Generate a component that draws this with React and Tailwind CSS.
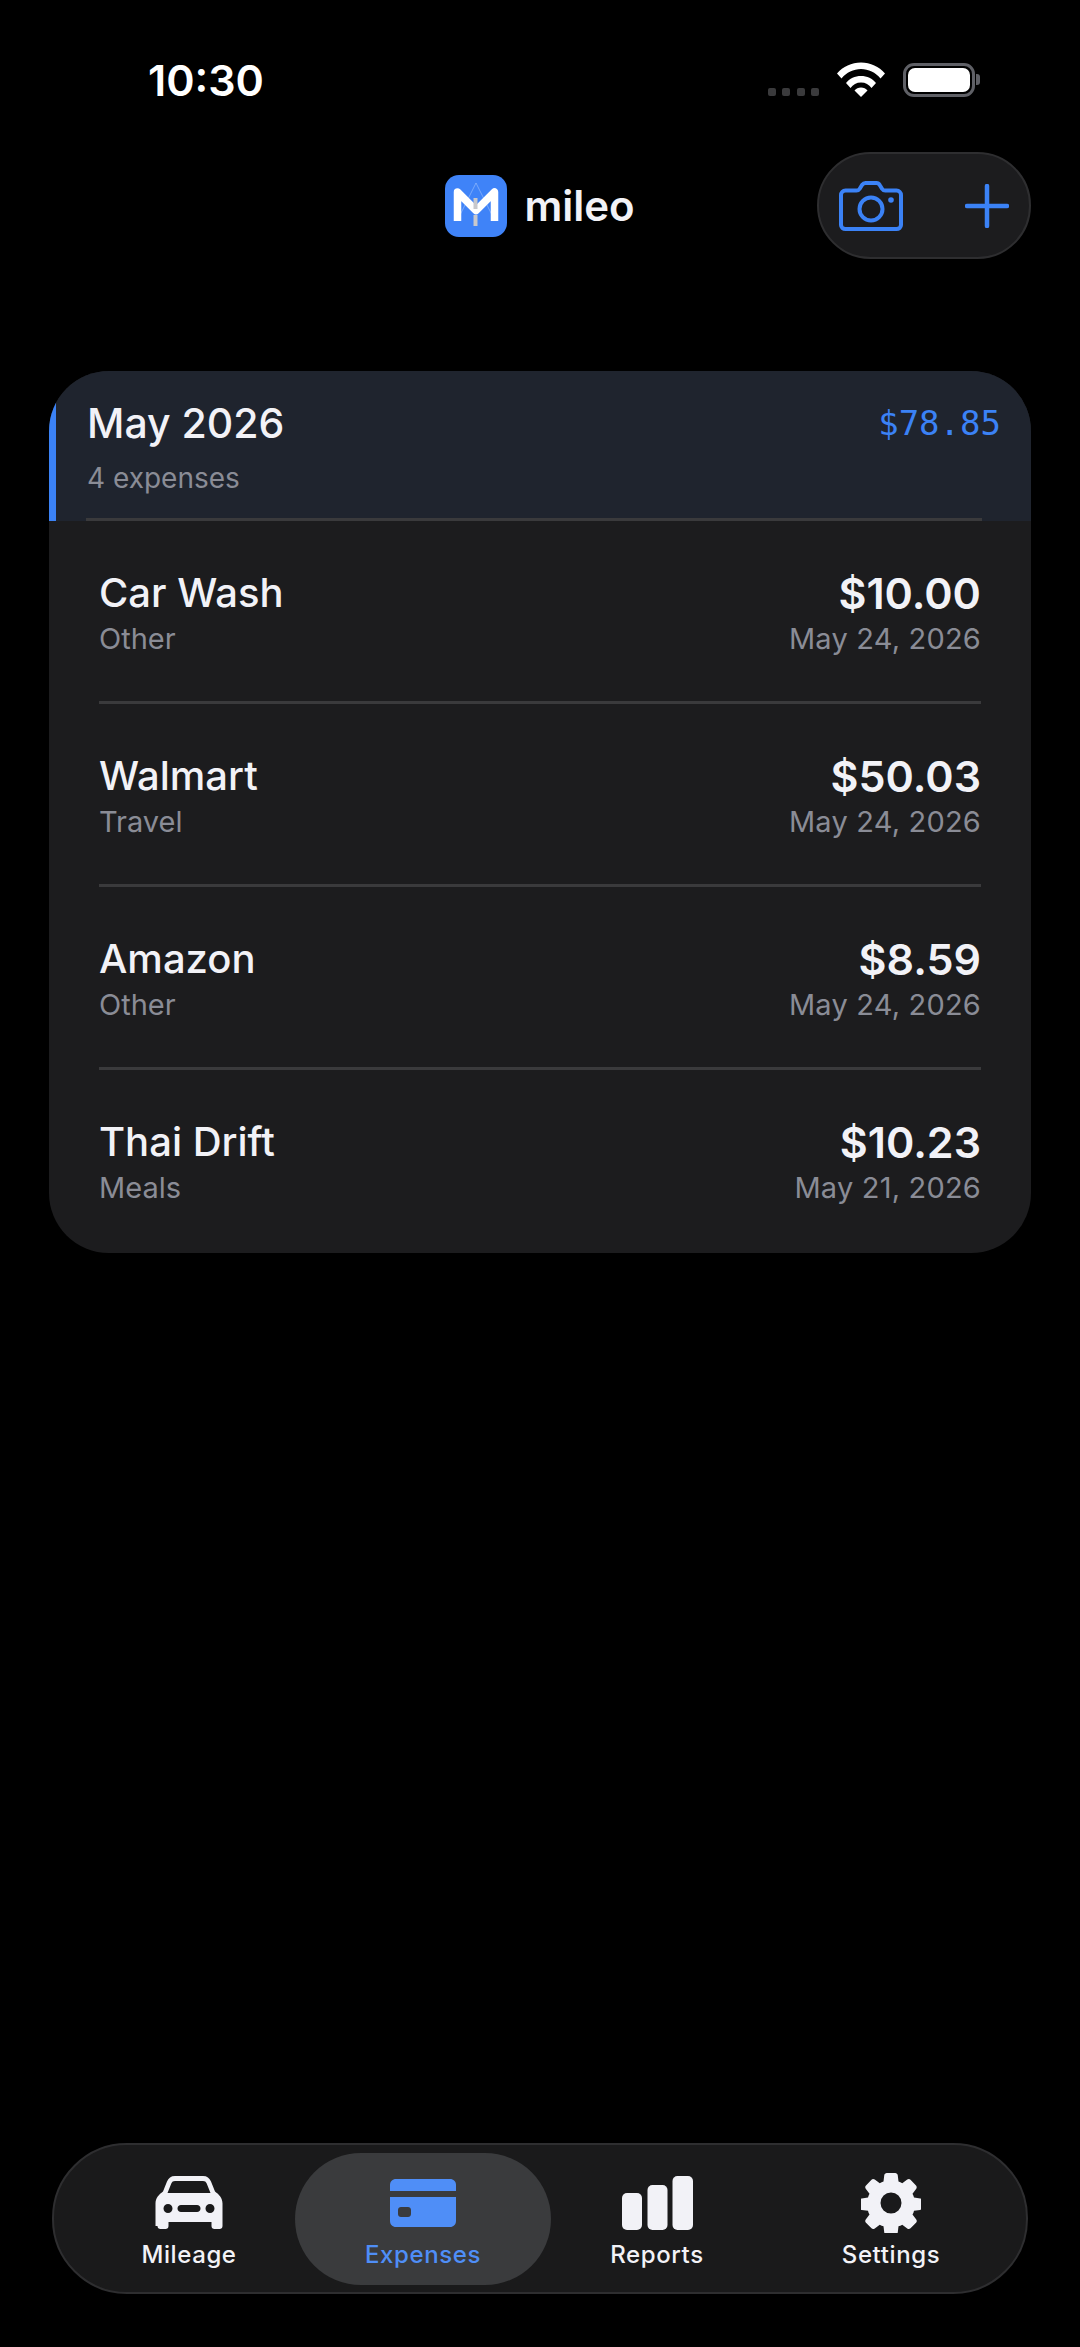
const Row = ({ title, sub, amount, date, last }) => (
  <div className={`mx-[50px] h-[183px] flex justify-between ${last ? "" : "border-b-[3px] border-[#3a3a3c]"}`}>
    <div className="pt-[47px] flex flex-col">
      <span className="text-[40px] leading-[50px] text-[#f2f2f7] [font-weight:450]">{title}</span>
      <span className="text-[29px] leading-[36px] text-[#8a8c96] mt-[3px]">{sub}</span>
    </div>
    <div className="pt-[47px] flex flex-col items-end">
      <span className="text-[43px] leading-[50px] font-semibold text-[#f2f2f7]">{amount}</span>
      <span className="text-[29px] leading-[36px] text-[#8a8c96] mt-[3px] tracking-[0.2px]">{date}</span>
    </div>
  </div>
);

const Wifi = () => (
  <svg width="48" height="35" viewBox="0 0 48 35" fill="#fff">
    <path d="M0 11.5C6 4.5 14.5 0.5 24 0.5s18 4 24 11l-4.500 5C38.500 10.500 31.500 7 24 7S9.500 10.500 4.500 16.500z" />
    <path d="M9 21C12.500 16.500 18 14 24 14s11.500 2.500 15 7l-4.500 5C32 22.500 28.500 20.500 24 20.500S16 22.500 13.500 26z" />
    <path d="M17.500 28.500C19 26.500 21.500 25.500 24 25.500s5 1 6.500 3L24 35z" />
  </svg>
);

const Battery = () => (
  <div className="flex items-center">
    <div className="w-[72px] h-[34px] rounded-[11px] border-[3px] border-[#5f6066] p-[2px]">
      <div className="w-full h-full bg-white rounded-[7px]" />
    </div>
    <div className="w-[4px] h-[11px] bg-[#5f6066] rounded-r-[3px] ml-[1px]" />
  </div>
);

const Logo = () => (
  <svg width="62" height="62" viewBox="0 0 62 62">
    <rect width="62" height="62" rx="14" fill="#3f83f8" />
    <path d="M31 8L12 46M31 8l19 38" stroke="#ffffff" strokeOpacity="0.3" strokeWidth="1" fill="none" />
    <path d="M12.500 46V17L31 35.500 49.500 17V46" fill="none" stroke="#fff" strokeWidth="7.500" strokeLinejoin="round" />
    <path d="M30.500 23v11M30.500 40v11" stroke="#c8c8cc" strokeWidth="4" />
  </svg>
);

const Camera = () => (
  <svg width="64" height="50" viewBox="0 0 64 50" fill="none" stroke="#3b82f6" strokeWidth="4" strokeLinejoin="round">
    <path d="M2 14c0-2.500 2-4.500 4.500-4.500h11c1.500 0 2.500-.7 3.200-1.800l2.300-3.700C24 2.700 25.300 2 26.500 2h11c1.200 0 2.500.7 3.200 2l2.300 3.700c.7 1.100 1.700 1.800 3.200 1.800h11.300c2.500 0 4.500 2 4.500 4.500v30c0 2.500-2 4-4.500 4H6.500C4 48 2 46.500 2 44z" />
    <circle cx="32" cy="28" r="11.500" />
    <circle cx="52" cy="19" r="2.800" fill="#3b82f6" stroke="none" />
  </svg>
);

const Plus = () => (
  <svg width="44" height="44" viewBox="0 0 44 44" fill="none" stroke="#3b82f6" strokeWidth="4.500" strokeLinecap="round">
    <path d="M22 2v40M2 22h40" />
  </svg>
);

const Car = () => (
  <svg width="68" height="53" viewBox="0 0 68 53" fill="#f2f2f7" fillRule="evenodd">
    <path d="M20 0h28c4 0 6.500 2 8 5.500l4 10c4 3 7.500 6.500 7.500 12V50c0 1.800-1.200 3-3 3h-5c-1.800 0-3-1.200-3-3v-4H13.500v4c0 1.800-1.200 3-3 3h-5c-1.800 0-3-1.200-3-3V50H.5V27.500c0-5.500 3.500-9 7.500-12l4-10C13.500 2 16 0 20 0zM20 5c-1.800 0-3 .8-3.700 2.500L12.500 17h43L51.700 7.500C51 5.800 49.800 5 48 5zM17.500 32.500a4.500 4.500 0 1 0-9 0 4.500 4.500 0 0 0 9 0zM59.500 32.500a4.500 4.500 0 1 0-9 0 4.500 4.500 0 0 0 9 0zM26 29c-2 0-3.500 1.500-3.500 3.500S24 36 26 36h16c2 0 3.500-1.500 3.500-3.500S44 29 42 29z" />
  </svg>
);

const CardIcon = () => (
  <svg width="66" height="48" viewBox="0 0 66 48" fill="#4f8ef7" fillRule="evenodd">
    <path d="M0 12V6c0-3.500 2.500-6 6-6h54c3.500 0 6 2.500 6 6v6z" />
    <path d="M0 18h66v24c0 3.500-2.500 6-6 6H6c-3.500 0-6-2.500-6-6zM11 28c-1.700 0-3 1.300-3 3v4c0 1.700 1.300 3 3 3h7c1.700 0 3-1.300 3-3v-4c0-1.700-1.300-3-3-3z" />
  </svg>
);

const Bars = () => (
  <svg width="71" height="54" viewBox="0 0 71 54" fill="#f2f2f7">
    <rect x="0" y="17" width="20" height="37" rx="5" />
    <rect x="25.500" y="9" width="20" height="45" rx="5" />
    <rect x="50.500" y="0" width="20.500" height="54" rx="5" />
  </svg>
);

const Gear = () => (
  <svg width="60" height="60" viewBox="0 0 24 24" fill="#f2f2f7" fillRule="evenodd">
    <path d="M10.300 0h3.400c.5 0 .9.400 1 .9l.3 2.500c.5.200 1 .4 1.500.7l2-1.500c.4-.3 1-.3 1.300.1l2.200 2.300c.3.300.4.900.1 1.300l-1.500 2c.3.500.5 1 .6 1.500l2.500.4c.5.100.8.500.8 1v2.600c0 .5-.4.900-.9 1l-2.400.3c-.1.500-.3 1-.6 1.500l1.500 2c.3.400.3 1-.1 1.300l-2.200 2.200c-.4.400-.9.400-1.300.1l-2-1.500c-.5.300-1 .5-1.500.6l-.3 2.500c-.1.500-.5.900-1 .9h-3.400c-.5 0-.9-.4-1-.9l-.3-2.500c-.5-.1-1-.3-1.500-.6l-2 1.500c-.4.300-1 .3-1.300-.1l-2.200-2.200c-.4-.3-.4-.9-.1-1.300l1.500-2c-.3-.5-.5-1-.6-1.500l-2.500-.3c-.5-.1-.8-.5-.8-1v-2.600c0-.5.300-.9.800-1l2.500-.4c.1-.5.300-1 .6-1.500l-1.500-2c-.3-.4-.3-1 .1-1.300l2.200-2.300c.3-.4.900-.4 1.300-.1l2 1.500c.5-.3 1-.5 1.500-.7L9.300.9c.1-.5.500-.9 1-.9zM12 7.800a4.200 4.200 0 1 0 0 8.400 4.200 4.200 0 0 0 0-8.400z" />
  </svg>
);

const NavItem = ({ icon, label, active }) => (
  <div className={`h-[132px] flex flex-col items-center ${active ? "-mx-[11px] bg-[#3a3b3d] rounded-[66px]" : ""}`}>
    <div className="h-[68px] mt-[16px] flex items-center justify-center">{icon}</div>
    <span className={`text-[24px] leading-[32px] mt-[2px] tracking-[0.6px] [font-weight:450] ${active ? "text-[#4f8ef7]" : "text-[#f2f2f7]"}`}>{label}</span>
  </div>
);

export default function App() {
  return (
    <div className="w-[1080px] h-[2347px] bg-black flex flex-col [font-family:Inter,sans-serif] overflow-hidden">
      <div className="h-[152px] pl-[148px] pr-[100px] pt-[54px] flex justify-between items-start">
        <span className="text-[43px] leading-[52px] font-semibold text-white">10:30</span>
        <div className="flex items-center mt-[8px]">
          <div className="flex gap-[6.500px] mt-[24px] mr-[18px]">
            <div className="w-[8px] h-[8px] rounded-[2px] bg-[#3a3a3c]" />
            <div className="w-[8px] h-[8px] rounded-[2px] bg-[#3a3a3c]" />
            <div className="w-[8px] h-[8px] rounded-[2px] bg-[#3a3a3c]" />
            <div className="w-[8px] h-[8px] rounded-[2px] bg-[#3a3a3c]" />
          </div>
          <Wifi />
          <div className="ml-[18px]"><Battery /></div>
        </div>
      </div>

      <div className="h-[107px] relative flex justify-center items-center">
        <div className="flex items-center gap-[17px]">
          <Logo />
          <span className="text-[42px] leading-[48px] font-semibold text-[#f2f2f7]">mileo</span>
        </div>
        <div className="absolute right-[49px] top-0 h-[107px] w-[214px] rounded-[54px] bg-[#1c1c1e] border-[2px] border-[#2e2e30] flex items-center pl-[20px] pr-[20px] justify-between">
          <Camera />
          <Plus />
        </div>
      </div>

      <div className="mt-[112px] mx-[49px] rounded-[60px] overflow-hidden bg-[#1c1c1e]">
        <div className="h-[150px] bg-[#1f242e] border-l-[7px] border-[#3b82f6] relative flex justify-between pl-[31px] pr-[30px]">
          <div className="flex flex-col pt-[27px]">
            <span className="text-[41px] leading-[50px] text-[#f2f2f7] [font-weight:550]">May 2026</span>
            <span className="text-[28px] leading-[36px] text-[#8a8c96] mt-[12px]">4 expenses</span>
          </div>
          <span className="pt-[30px] text-[34px] leading-[44px] text-[#3b82f6] [font-family:'DejaVu_Sans_Mono',monospace]">$78.85</span>
          <div className="absolute left-[30px] right-[49px] bottom-0 h-[3px] bg-[#3a3a3c]" />
        </div>
        <Row title="Car Wash" sub="Other" amount="$10.00" date="May 24, 2026" />
        <Row title="Walmart" sub="Travel" amount="$50.03" date="May 24, 2026" />
        <Row title="Amazon" sub="Other" amount="$8.59" date="May 24, 2026" />
        <Row title="Thai Drift" sub="Meals" amount="$10.23" date="May 21, 2026" last />
      </div>

      <div className="mt-auto mb-[53px] mx-[52px] h-[151px] rounded-[75px] bg-[#1a1a1b] border-[2px] border-[#2e2e30] px-[18px] grid grid-cols-4 items-center">
        <NavItem icon={<Car />} label="Mileage" />
        <NavItem icon={<CardIcon />} label="Expenses" active />
        <NavItem icon={<Bars />} label="Reports" />
        <NavItem icon={<Gear />} label="Settings" />
      </div>
    </div>
  );
}
